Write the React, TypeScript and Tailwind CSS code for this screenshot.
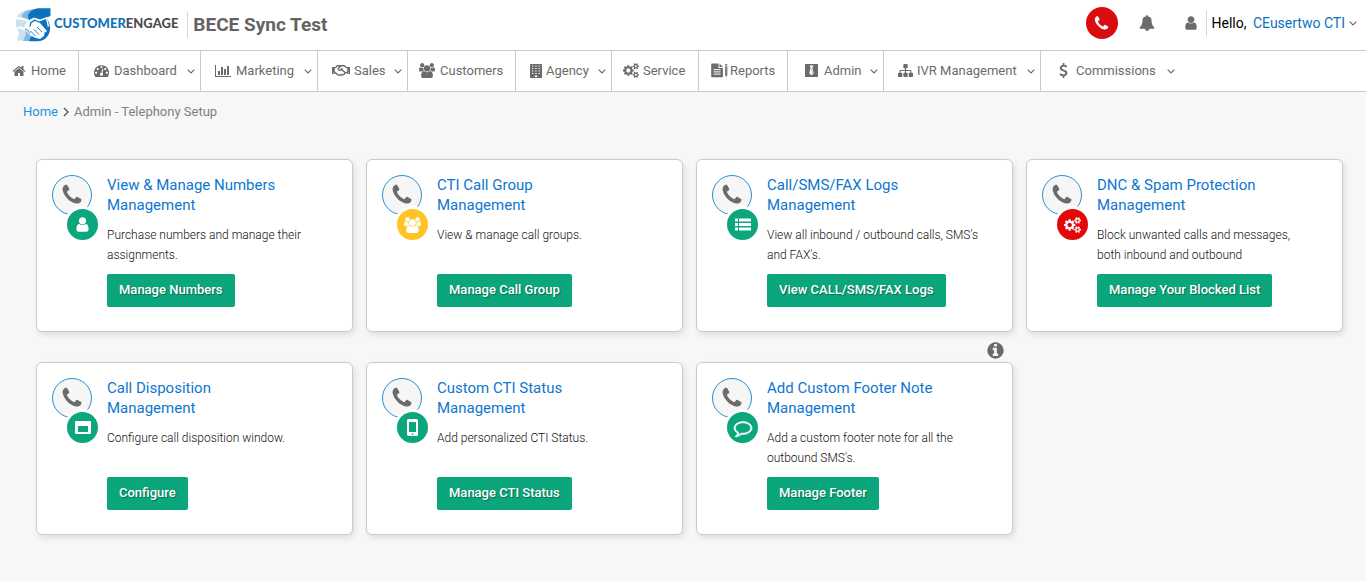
import type { ReactNode } from "react";
import { FaRegHandshake } from "react-icons/fa";

type GlyphProps = { d: string; box?: string; className?: string };

function Glyph({ d, box = "0 0 1792 1792", className = "size-4" }: GlyphProps) {
  return (
    <svg viewBox={box} className={`shrink-0 ${className}`} fill="currentColor" aria-hidden="true">
      <path d={d} />
    </svg>
  );
}

const PHONE =
  "M1600 1240q0 27-10 70.5t-21 68.5q-21 50-122 106-94 51-186 51-27 0-53-3.5t-57.5-12.5-47-14.5-55.5-20.5-49-18q-98-35-175-83-127-79-264-216t-216-264q-48-77-83-175-3-9-18-49t-20.5-55.5-14.5-47-12.5-57.5-3.5-53q0-92 51-186 56-101 106-122 25-11 68.5-21t70.5-10q14 0 21 3 18 6 53 76 11 19 30 54t35 63.5 31 53.5q3 4 17.5 25t21.5 35.5 7 28.5q0 20-28.5 50t-62 55-62 53-28.5 46q0 9 5 22.5t8.5 20.5 14 24 11.5 19q76 137 174 235t235 174q2 1 19 11.5t24 14 20.5 8.5 22.5 5q18 0 46-28.5t53-62 55-62 50-28.5q14 0 28.5 7t35.5 21.5 25 17.5q25 15 53.5 31t63.5 35 54 30q70 35 76 53 3 7 3 21z";
const HOME =
  "M1472 992v480q0 26-19 45t-45 19h-384v-384h-256v384h-384q-26 0-45-19t-19-45v-480q0-1 .5-3t.5-3l575-474 575 474q1 2 1 6zm223-69l-62 74q-8 9-21 11h-3q-13 0-21-7l-692-577-692 577q-12 8-24 7-13-2-21-11l-62-74q-8-10-7-23.5t11-21.5l719-599q32-26 76-26t76 26l244 204v-195q0-14 9-23t23-9h192q14 0 23 9t9 23v408l219 182q10 8 11 21.5t-7 23.5z";
const USER =
  "M1536 1399q0 109-62.5 187t-150.5 78h-854q-88 0-150.5-78t-62.5-187q0-85 8.5-160.5t31.5-152 58.5-131 94-89 134.5-34.5q131 128 313 128t313-128q76 0 134.5 34.5t94 89 58.5 131 31.5 152 8.5 160.5zm-256-887q0 159-112.5 271.5t-271.5 112.5-271.5-112.5-112.5-271.5 112.5-271.5 271.5-112.5 271.5 112.5 112.5 271.5z";
const USERS =
  "M593 896q-162 5-265 128h-134q-82 0-138-40.5t-56-118.5q0-353 124-353 6 0 43.5 21t97.5 42.5 119 21.5q67 0 133-23-5 37-5 66 0 139 81 256zm1071 637q0 120-73 189.5t-194 69.5h-874q-121 0-194-69.5t-73-189.5q0-53 3.5-103.5t14-109 26.5-108.5 43-97.5 62-81 85.5-53.5 111.5-20q10 0 43 21.5t73 48 107 48 135 21.5 135-21.5 107-48 73-48 43-21.5q61 0 111.5 20t85.5 53.5 62 81 43 97.5 26.5 108.5 14 109 3.5 103.5zm-1024-1277q0 106-75 181t-181 75-181-75-75-181 75-181 181-75 181 75 75 181zm704 384q0 159-112.5 271.5t-271.5 112.5-271.5-112.5-112.5-271.5 112.5-271.5 271.5-112.5 271.5 112.5 112.5 271.5zm576 225q0 78-56 118.5t-138 40.5h-134q-103-123-265-128 81-117 81-256 0-29-5-66 66 23 133 23 59 0 119-21.5t97.5-42.5 43.5-21q124 0 124 353zm-128-609q0 106-75 181t-181 75-181-75-75-181 75-181 181-75 181 75 75 181z";
const COGS =
  "M896 896q0-106-75-181t-181-75-181 75-75 181 75 181 181 75 181-75 75-181zm768 512q0-52-38-90t-90-38-90 38-38 90q0 53 37.5 90.5t90.5 37.5 90.5-37.5 37.5-90.5zm0-1024q0-52-38-90t-90-38-90 38-38 90q0 53 37.5 90.5t90.5 37.5 90.5-37.5 37.5-90.5zm-384 421v185q0 10-7 19.5t-16 10.5l-155 24q-11 35-32 76 34 48 90 115 7 11 7 20 0 12-7 19-23 30-82.5 89.5t-78.5 59.5q-11 0-21-7l-115-90q-37 19-77 31-11 108-23 155-7 24-30 24h-186q-11 0-20-7.5t-10-17.5l-23-153q-34-10-75-31l-118 89q-7 7-20 7-11 0-21-8-144-133-144-160 0-9 7-19 10-14 41-53t47-61q-23-44-35-82l-152-24q-10-1-17-9.5t-7-19.5v-185q0-10 7-19.5t16-10.5l155-24q11-35 32-76-34-48-90-115-7-11-7-20 0-12 7-20 22-30 82-89t79-59q11 0 21 7l115 90q34-18 77-32 11-108 23-154 7-24 30-24h186q11 0 20 7.5t10 17.5l23 153q34 10 75 31l118-89q8-7 20-7 11 0 21 8 144 133 144 160 0 8-7 19-12 16-42 54t-45 60q23 48 34 82l152 23q10 2 17 10.5t7 19.5zm640 533v140q0 16-149 31-12 27-30 52 51 113 51 138 0 4-4 7-122 71-124 71-8 0-46-47t-52-68q-20 2-30 2t-30-2q-14 21-52 68t-46 47q-2 0-124-71-4-3-4-7 0-25 51-138-18-25-30-52-149-15-149-31v-140q0-16 149-31 13-29 30-52-51-113-51-138 0-4 4-7 4-2 35-20t59-34 30-16q8 0 46 46.5t52 67.5q20-2 30-2t30 2q51-71 92-112l6-2q4 0 124 70 4 3 4 7 0 25-51 138 17 23 30 52 149 15 149 31zm0-1024v140q0 16-149 31-12 27-30 52 51 113 51 138 0 4-4 7-122 71-124 71-8 0-46-47t-52-68q-20 2-30 2t-30-2q-14 21-52 68t-46 47q-2 0-124-71-4-3-4-7 0-25 51-138-18-25-30-52-149-15-149-31v-140q0-16 149-31 13-29 30-52-51-113-51-138 0-4 4-7 4-2 35-20t59-34 30-16q8 0 46 46.5t52 67.5q20-2 30-2t30 2q51-71 92-112l6-2q4 0 124 70 4 3 4 7 0 25-51 138 17 23 30 52 149 15 149 31z";
const CHART =
  "M640 896v512h-256v-512h256zm384-512v1024h-256v-1024h256zm1024 1152v128h-2048v-1536h128v1408h1920zm-640-896v768h-256v-768h256zm384-384v1152h-256v-1152h256z";
const SITEMAP =
  "M1792 1248v320q0 40-28 68t-68 28h-320q-40 0-68-28t-28-68v-320q0-40 28-68t68-28h96v-192h-512v192h96q40 0 68 28t28 68v320q0 40-28 68t-68 28h-320q-40 0-68-28t-28-68v-320q0-40 28-68t68-28h96v-192h-512v192h96q40 0 68 28t28 68v320q0 40-28 68t-68 28h-320q-40 0-68-28t-28-68v-320q0-40 28-68t68-28h96v-192q0-52 38-90t90-38h512v-192h-96q-40 0-68-28t-28-68v-320q0-40 28-68t68-28h320q40 0 68 28t28 68v320q0 40-28 68t-68 28h-96v192h512q52 0 90 38t38 90v192h96q40 0 68 28t28 68z";
const DOLLAR =
  "M1362 1185q0 153-99.5 263.5t-258.5 136.5v175q0 14-9 23t-23 9h-135q-13 0-22.5-9.5t-9.5-22.5v-175q-66-9-127.5-31t-101.5-44.5-74-48-46.5-37.5-17.5-18q-17-21-2-41l103-135q7-10 23-12 15-2 24 9l2 2q113 99 243 125 37 8 74 8 81 0 142.5-43t61.5-122q0-28-15-53t-33.5-42-58.5-37.5-66-32-80-32.5q-39-16-61.5-25t-61.5-26.5-62.5-31-56.5-35.5-53.5-42.5-43.5-49-35.5-58-21-66.5-8.5-78q0-138 98-242t255-134v-180q0-13 9.5-22.5t22.5-9.5h135q14 0 23 9t9 23v176q57 6 110.5 23t87 33.5 63.5 37.5 39 29 15 14q17 18 5 38l-81 146q-8 15-23 16-14 3-27-7-3-3-14.5-12t-39-26.5-58.5-32-74.5-26-85.5-11.5q-95 0-155 43t-60 111q0 26 8.5 48t29.5 41.5 39.5 33 56 31 60.5 27 70 27.5q53 20 81 31.5t76 35 75.5 42.5 62 50 53 63.5 31.5 76.5 13 94z";
const COMMENT =
  "M896 384q-204 0-381.5 69.5t-282 187.5-104.5 255q0 112 71.5 213.5t201.5 175.5l87 50-27 96q-24 91-70 172 152-63 275-171l43-38 57 6q69 8 130 8 204 0 381.5-69.5t282-187.5 104.5-255-104.5-255-282-187.5-381.5-69.5zm896 512q0 174-120 321.5t-326 233-450 85.5q-70 0-145-8-198 175-460 242-49 14-114 22h-5q-15 0-27-10.5t-16-27.5v-1q-3-4-.5-12t2-10 4.5-9.5l6-9 7-8.5 8-9q7-8 31-34.5t34.5-38 31-39.5 32.5-51 27-59 26-76q-157-89-247.5-220t-90.5-281q0-174 120-321.5t326-233 450-85.5 450 85.5 326 233 120 321.5z";
const BELL =
  "M912 1696q0-16-16-16-59 0-101.5-42.5t-42.5-101.5q0-16-16-16t-16 16q0 73 51.5 124.5t124.5 51.5q16 0 16-16zm816-288q0 52-38 90t-90 38h-448q0 106-75 181t-181 75-181-75-75-181h-448q-52 0-90-38t-38-90q50-42 91-88t85-119.5 74.5-158.5 50-206 19.5-260q0-152 117-282.5t307-158.5q-8-19-8-39 0-40 28-68t68-28 68 28 28 68q0 20-8 39 190 28 307 158.5t117 282.5q0 139 19.5 260t50 206 74.5 158.5 85 119.5 91 88z";
const GAUGE =
  "M384 1152q0-53-37.5-90.5t-90.5-37.5-90.5 37.5-37.5 90.5 37.5 90.5 90.5 37.5 90.5-37.5 37.5-90.5zm192-448q0-53-37.5-90.5t-90.5-37.5-90.5 37.5-37.5 90.5 37.5 90.5 90.5 37.5 90.5-37.5 37.5-90.5zm428 481l101-382q6-26-7.5-48.5t-38.5-29.5-48 6.5-30 39.5l-101 382q-60 5-107 43.5t-63 98.5q-20 77 20 146t117 89 146-20 89-117q16-60-6-117t-72-91zm660-33q0-53-37.5-90.5t-90.5-37.5-90.5 37.5-37.5 90.5 37.5 90.5 90.5 37.5 90.5-37.5 37.5-90.5zm-640-640q0-53-37.5-90.5t-90.5-37.5-90.5 37.5-37.5 90.5 37.5 90.5 90.5 37.5 90.5-37.5 37.5-90.5zm448 192q0-53-37.5-90.5t-90.5-37.5-90.5 37.5-37.5 90.5 37.5 90.5 90.5 37.5 90.5-37.5 37.5-90.5zm320 448q0 261-141 483-19 29-54 29h-1402q-35 0-54-29-141-221-141-483 0-182 71-348t191-286 286-191 348-71 348 71 286 191 191 286 71 348z";
const INFO =
  "M1152 1376v-160q0-14-9-23t-23-9h-96v-512q0-14-9-23t-23-9h-320q-14 0-23 9t-9 23v160q0 14 9 23t23 9h96v320h-96q-14 0-23 9t-9 23v160q0 14 9 23t23 9h448q14 0 23-9t9-23zm-128-896v-160q0-14-9-23t-23-9h-192q-14 0-23 9t-9 23v160q0 14 9 23t23 9h192q14 0 23-9t9-23zm640 416q0 209-103 385.5t-279.5 279.5-385.5 103-385.5-103-279.5-279.5-103-385.5 103-385.5 279.5-279.5 385.5-103 385.5 103 279.5 279.5 103 385.5z";

function Chevron({ className = "" }: { className?: string }) {
  return (
    <svg viewBox="0 0 8 5" className={`h-[5px] w-2 shrink-0 ${className}`} fill="none" stroke="currentColor" strokeWidth="1.2" aria-hidden="true">
      <path d="M0.7 0.7 4 4 7.3 0.7" />
    </svg>
  );
}

function Building() {
  const cells = [0, 1, 2, 3].flatMap((r) => [0, 1, 2].map((c) => [c, r]));
  return (
    <svg viewBox="0 0 12 14" className="h-3.5 w-3 shrink-0" aria-hidden="true">
      <rect width="12" height="14" rx="0.6" fill="currentColor" />
      {cells.map(([c, r]) => (
        <rect key={`${c}-${r}`} x={2 + c * 3.3} y={1.5 + r * 2.5} width="1.3" height="1" fill="#fff" />
      ))}
      <rect x="4.8" y="11.4" width="2.4" height="1.6" fill="#fff" />
    </svg>
  );
}

function Report() {
  return (
    <svg viewBox="0 0 18 15" className="h-[15px] w-[18px] shrink-0" fill="currentColor" aria-hidden="true">
      <path d="M1 0.5h6.500v4.400h4.400V13.400a.8.8 0 0 1-.8.8H1a.8.8 0 0 1-.8-.8V1.300a.8.8 0 0 1 .8-.8z" />
      <path d="M8.500.6 11.900 4H8.500z" />
      <path d="M2.600 6.700h7M2.600 8.900h7M2.600 11.100h7" stroke="#fff" strokeWidth="1" />
      <path d="M14 3.200h2.400v8.600l-1.200 2.400-1.200-2.400z" opacity=".85" />
      <path d="M14 1.200h2.400v1.300H14z" />
    </svg>
  );
}

function Tie() {
  return (
    <svg viewBox="0 0 13 13" className="size-[13px] shrink-0" aria-hidden="true">
      <rect width="13" height="13" rx="0.5" fill="currentColor" />
      <path d="M4.500 1.400h4L7.400 3.600l1.300 5.600-2.200 2.300-2.200-2.300 1.300-5.600z" fill="#fff" />
      <path d="m6.500 4.200.9 4.400-.9 1" stroke="currentColor" strokeWidth=".5" fill="none" />
    </svg>
  );
}

type NavItem = { label: string; icon: ReactNode; box: string; menu?: boolean };

const nav: NavItem[] = [
  { label: "Home", icon: <Glyph d={HOME} className="size-3.5" />, box: "w-[79px] pl-3 gap-[5px]" },
  { label: "Dashboard", icon: <Glyph d={GAUGE} className="size-[15px]" />, box: "w-[122px] pl-[15px] gap-[5px]", menu: true },
  { label: "Marketing", icon: <Glyph d={CHART} box="0 0 2048 1792" className="h-3.5 w-4" />, box: "w-[117px] pl-[14px] gap-[5px]", menu: true },
  { label: "Sales", icon: <FaRegHandshake className="h-[15px] w-[18px] shrink-0" />, box: "w-[90px] pl-[14px] gap-1", menu: true },
  { label: "Customers", icon: <Glyph d={USERS} box="0 0 1920 1792" className="h-[15px] w-4" />, box: "w-[108px] pl-[11px] gap-[5px]" },
  { label: "Agency", icon: <Building />, box: "w-24 pl-[14px] gap-1", menu: true },
  { label: "Service", icon: <Glyph d={COGS} box="0 0 1920 1792" className="h-[15px] w-4" />, box: "w-[87px] pl-[11px] gap-1" },
  { label: "Reports", icon: <Report />, box: "w-[89px] pl-3 gap-px" },
  { label: "Admin", icon: <Tie />, box: "w-24 pl-[17px] gap-1.5", menu: true },
  { label: "IVR Management", icon: <Glyph d={SITEMAP} className="size-[15px]" />, box: "w-[157px] pl-[14px] gap-1", menu: true },
  { label: "Commissions", icon: <Glyph d={DOLLAR} className="size-[15px]" />, box: "w-[139px] pl-[15px] gap-[5px]", menu: true },
];

type Tool = { title: string; text: string; action: string; color: string; icon: ReactNode; info?: boolean };

const GREEN = "bg-[#0ba67c]";

const tools: Tool[] = [
  { title: "View & Manage Numbers", text: "Purchase numbers and manage their assignments.", action: "Manage Numbers", color: GREEN, icon: <Glyph d={USER} className="size-[17px]" /> },
  { title: "CTI Call Group", text: "View & manage call groups.", action: "Manage Call Group", color: "bg-[#ffc423]", icon: <Glyph d={USERS} box="0 0 1920 1792" className="h-4 w-[17px]" /> },
  {
    title: "Call/SMS/FAX Logs",
    text: "View all inbound / outbound calls, SMS's and FAX's.",
    action: "View CALL/SMS/FAX Logs",
    color: GREEN,
    icon: (
      <svg viewBox="0 0 16 13" className="h-[13px] w-4" fill="currentColor" aria-hidden="true">
        <path d="M0 .5h3v3H0zM4 .5h12v3H4zM0 5h3v3H0zM4 5h12v3H4zM0 9.500h3v3H0zM4 9.500h12v3H4z" />
      </svg>
    ),
  },
  { title: "DNC & Spam Protection", text: "Block unwanted calls and messages, both inbound and outbound", action: "Manage Your Blocked List", color: "bg-[#e30909]", icon: <Glyph d={COGS} box="0 0 1920 1792" className="h-4 w-[17px]" /> },
  {
    title: "Call Disposition",
    text: "Configure call disposition window.",
    action: "Configure",
    color: GREEN,
    icon: (
      <svg viewBox="0 0 16 13" className="h-[13px] w-4" fill="currentColor" fillRule="evenodd" aria-hidden="true">
        <path d="M1 0h14a1 1 0 0 1 1 1v11a1 1 0 0 1-1 1H1a1 1 0 0 1-1-1V1a1 1 0 0 1 1-1zM3 5v6h10V5z" />
      </svg>
    ),
  },
  {
    title: "Custom CTI Status",
    text: "Add personalized CTI Status.",
    action: "Manage CTI Status",
    color: GREEN,
    icon: (
      <svg viewBox="0 0 11 17" className="h-[17px] w-[11px]" fill="currentColor" fillRule="evenodd" aria-hidden="true">
        <path d="M1.500 0h8A1.500 1.500 0 0 1 11 1.500v14a1.500 1.500 0 0 1-1.500 1.500h-8A1.500 1.500 0 0 1 0 15.500v-14A1.500 1.500 0 0 1 1.500 0zM2 3v10h7V3zm3.500 11.200a.9.9 0 1 0 0 1.800.9.9 0 0 0 0-1.800z" />
      </svg>
    ),
  },
  {
    title: "Add Custom Footer Note",
    text: "Add a custom footer note for all the outbound SMS's.",
    action: "Manage Footer",
    color: GREEN,
    icon: <Glyph d={COMMENT} className="size-[18px] overflow-visible stroke-current stroke-[60]" />,
    info: true,
  },
];

function LogoMark() {
  return (
    <svg viewBox="0 0 35 34" className="h-[34px] w-[35px] shrink-0" aria-hidden="true">
      <path d="M1 9C3 4 8 2.500 14 2.500h10v26c-4 3.500-9 4-12 4H1l2-7-2-6z" fill="#c9e1f1" />
      <path d="M6 7.500C8 3 12 1.500 18 1.500h9v27c-3 3-6 4.500-10 4.500H7l3-7z" fill="#7fb7de" />
      <path d="M12 7.500C14 2.500 18 .3 24 .3h10.500V8l-4 1.500c2 3.500 4 7.500 3.500 12-.5 7-6 11.800-13 11.800h-8l3-7z" fill="#0b72bd" />
      <path d="M0 9.500c5-.5 8 .5 13 2.500l5-2.500 6 2 7-2.500 2 9-4 5-1 5-4 3-4-1-5-2-5-5-5-2-5-1z" fill="#fff" />
      <path d="M0 11.500c4-.3 7 0 11 2l-3 6-3.500-1L0 19z" fill="#c9e1f1" />
      <path d="m14 14.500 4.500-3 5 2L30 11l2 9-3 3-8-6.500-4 .500-3.500 2z" fill="#0b72bd" />
      <path d="m15.500 15 3.500-2 5 2 7 8-1.500 1.500-8-7-4 .500-3 1.500z" fill="#fff" />
      <path d="m21 19 5 5M18 21.500l5 5M14.500 23l5 5M9 21l3 1.500 2 3" stroke="#0b72bd" strokeWidth=".9" fill="none" />
    </svg>
  );
}

function ToolCard({ tool }: { tool: Tool }) {
  return (
    <section className="relative flex min-h-[173px] gap-[15px] rounded-md border border-[#cbcbcb] bg-white py-[15px] pr-7 pl-[15px] shadow-[2px_3px_6px_rgba(0,0,0,0.10)]">
      {tool.info && (
        <button type="button" aria-label="About the footer note" className="absolute -top-[22px] right-[7px] text-[#6b6b6b]">
          <Glyph d={INFO} className="size-[19px]" />
        </button>
      )}
      <div className="relative size-10 shrink-0">
        <span className="flex size-10 items-center justify-center rounded-full border border-[#2a8fd0] bg-[#f6f6f6] text-[#6b6b6b]">
          <Glyph d={PHONE} className="size-6" />
        </span>
        <span className={`absolute top-[34px] left-[15px] flex size-[31px] items-center justify-center rounded-full text-white ring-3 ring-white ${tool.color}`}>
          {tool.icon}
        </span>
      </div>
      <div className="flex min-w-0 flex-1 flex-col items-start">
        <h2 className="text-[15px] leading-5 text-[#0e76d0]">
          {tool.title}
          <br />
          Management
        </h2>
        <p className="mt-2.5 mb-[9px] min-h-10 text-[12px] leading-5 font-light text-[#111]">{tool.text}</p>
        <button type="button" className={`h-[33px] rounded-xs px-3 pb-0.5 text-[13px] font-medium text-white [text-shadow:1px_1px_1px_rgba(0,0,0,0.35)] ${GREEN}`}>
          {tool.action}
        </button>
      </div>
    </section>
  );
}

export default function App() {
  return (
    <div className="min-h-screen bg-[#f7f7f7] font-[Roboto,sans-serif] text-[#6b6b6b]">
      <header className="flex h-[50px] items-center justify-between bg-white pr-[9px] pl-4">
        <div className="flex items-center">
          <a href="#" className="flex items-center gap-[3px]">
            <LogoMark />
            <span className="pb-0.5 font-[Lato,sans-serif] text-[13px] font-black text-[#4d4d4f]">
              <span className="text-[#1272bb]">CUSTOMER</span>ENGAGE
            </span>
          </a>
          <h1 className="ml-[9px] border-l border-[#d5d5d5] pl-[5px] text-[19px] leading-[26px] font-bold text-[#636363]">BECE Sync Test</h1>
        </div>
        <div className="flex items-center pb-1">
          <button type="button" aria-label="Call" className="flex size-8 items-center justify-center rounded-full bg-[#d90d0d] text-white">
            <Glyph d={PHONE} className="size-[17px]" />
          </button>
          <button type="button" aria-label="Notifications" className="ml-[21px]">
            <Glyph d={BELL} className="size-4" />
          </button>
          <span className="ml-7">
            <Glyph d={USER} className="size-4" />
          </span>
          <button type="button" className="ml-[7px] flex items-center border-l border-[#cfd8dc] pl-[5px] text-[14px] leading-[26px] text-black">
            Hello,&nbsp;<span className="ml-[3px] text-[#0b72bd]">CEusertwo CTI</span>
            <Chevron className="ml-1 text-[#6b6b6b]" />
          </button>
        </div>
      </header>

      <nav className="flex h-[42px] border-y border-[#cbcbcb] bg-white text-[13px]">
        {nav.map((item) => (
          <a key={item.label} href="#" className={`flex items-center border-r border-[#cbcbcb] pb-px whitespace-nowrap last:border-r-0 ${item.box}`}>
            {item.icon}
            <span>{item.label}</span>
            {item.menu && <Chevron className="mt-0.5 mr-[5px] ml-auto" />}
          </a>
        ))}
      </nav>

      <div className="flex h-10 items-center gap-[5px] pl-[23px] text-[13px] text-[#808080]">
        <a href="#" className="text-[#1b95e0]">Home</a>
        <svg viewBox="0 0 6 10" className="h-2.5 w-1.5" fill="none" stroke="#555" strokeWidth="1.4" aria-hidden="true">
          <path d="m1 1 4 4-4 4" />
        </svg>
        <span>Admin - Telephony Setup</span>
      </div>

      <main className="grid grid-cols-4 gap-x-[13px] gap-y-[30px] pt-[27px] pr-[23px] pb-8 pl-9">
        {tools.map((tool) => (
          <ToolCard key={tool.title} tool={tool} />
        ))}
      </main>
    </div>
  );
}
